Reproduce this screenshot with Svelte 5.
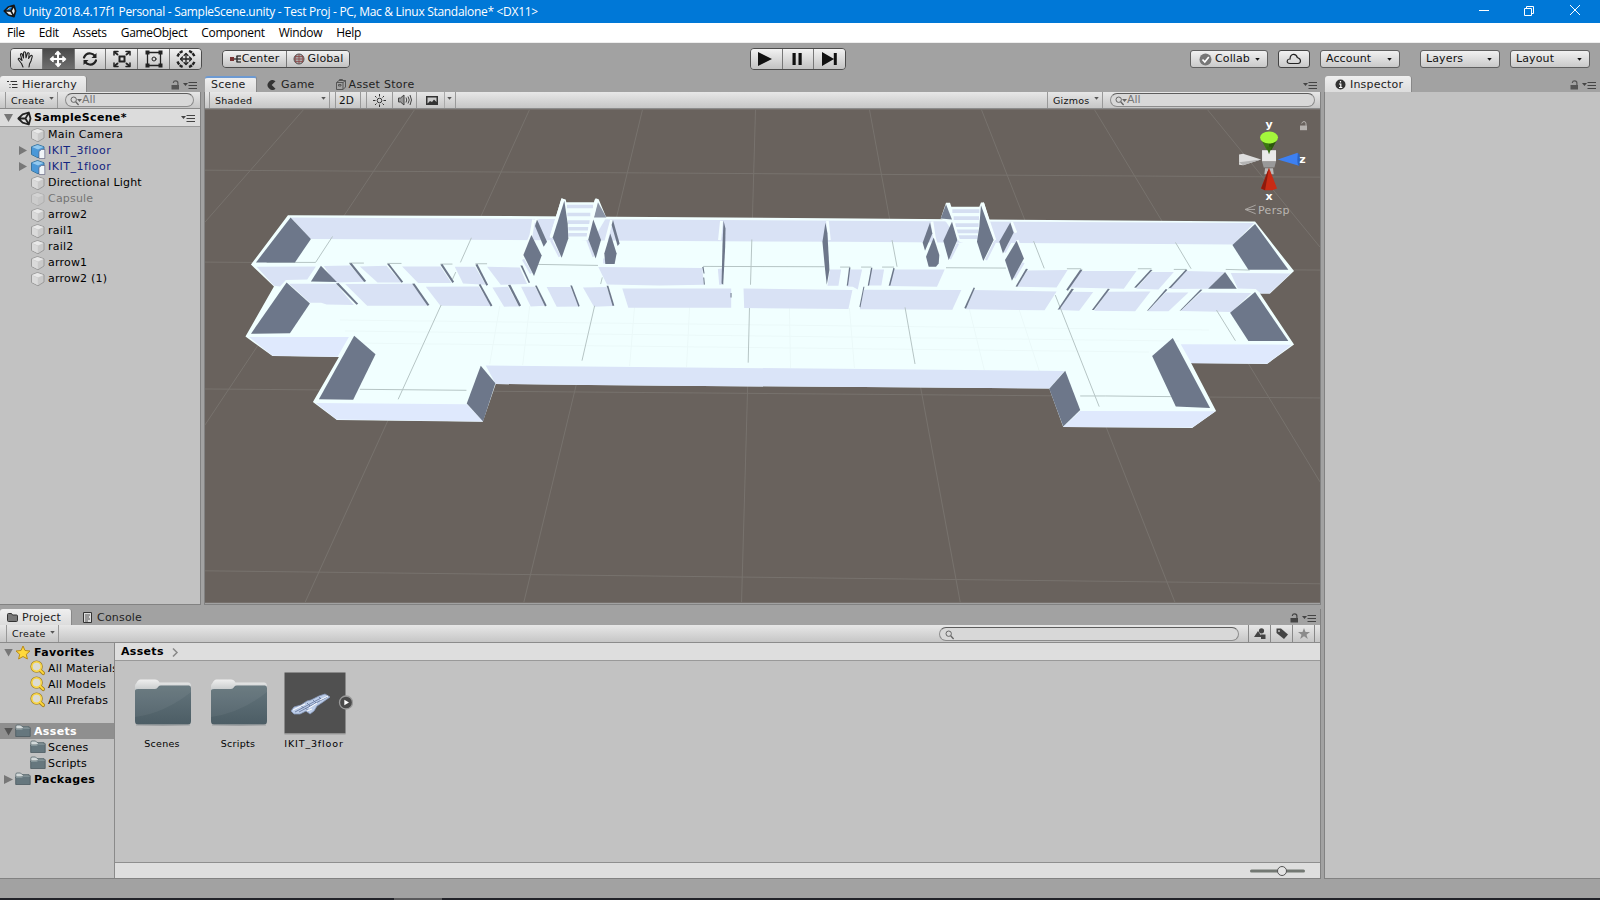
<script>
  const menus = ['File', 'Edit', 'Assets', 'GameObject', 'Component', 'Window', 'Help'];
  const tools = ['hand', 'move', 'rotate', 'scale', 'rect', 'transform'];
  const objects = [
    { name: 'Main Camera' },
    { name: 'IKIT_3floor', prefab: true },
    { name: 'IKIT_1floor', prefab: true },
    { name: 'Directional Light' },
    { name: 'Capsule', off: true },
    { name: 'arrow2' },
    { name: 'rail1' },
    { name: 'rail2' },
    { name: 'arrow1' },
    { name: 'arrow2 (1)' }
  ];

  // Wall faces, in thirds of a pixel, one list for each section of the building.
  const sections = [
    {
      x: 200,
      face: [
        '170,230 348,229 322,268 258,270 240,289 222,287',
        '372,228 450,226 495,275 405,277',
        '480,229 560,227 605,277 533,277',
        '607,229 722,229 755,279 655,279',
        '765,230 826,230 858,284 790,280',
        '862,230 960,232 982,282 903,284',
        '268,281 408,281 462,345 380,343 364,338 330,338',
        '436,282 637,281 685,347 502,347',
        '678,290 837,289 875,348 722,347'
      ],
      front: ['147,441 447,441 413,500 218,497', '348,639 801,643 850,695 410,689'],
      dark: [
        '272,82 333,147 285,217 168,217',
        '363,227 411,276 333,274',
        '260,277 330,340 270,430 153,431',
        '463,437 527,493 460,629 357,628',
        '843,527 887,580 850,695 801,641',
        '448,220 455,219 499,273 493,276',
        '562,222 568,221 610,275 605,278',
        '722,224 728,222 763,275 758,279',
        '827,224 833,222 865,284 860,287',
        '962,226 968,226 991,277 987,279',
        '408,280 416,279 475,341 470,344',
        '637,281 644,280 689,345 683,347',
        '837,284 842,282 878,346 873,349'
      ],
      line: 'M448,219H492M562,220H605M722,222H758M827,221H862M200,217H347M398,139L347,217M815,143L782,217M768,246L758,268M724,345L595,628M480,598L800,601'
    },
    {
      x: 460,
      face: [
        '98,292 145,290 178,349 133,350',
        '184,290 226,290 256,347 213,349',
        '261,291 332,291 357,349 291,350',
        '370,292 441,291 461,348 403,350',
        '488,295 815,295 815,353 506,353',
        '416,231 728,234 733,284 600,286 442,283',
        '775,237 787,235 787,284 779,284'
      ],
      front: [],
      dark: [
        '145,285 152,284 184,346 178,349',
        '226,287 231,286 261,346 256,349',
        '332,286 337,286 360,348 356,350',
        '441,287 446,287 464,346 459,348',
        '813,309 816,309 816,322 813,322',
        '728,231 732,231 735,250 732,250',
        '731,262 734,262 736,283 733,284'
      ],
      line: 'M235,223L415,226M730,229L1095,230M428,262L423,282M877,148L873,284M405,347L367,512M870,350L866,518'
    },
    {
      x: 800,
      face: [
        '92,238 125,238 117,287 84,287',
        '151,238 188,238 175,298 160,290 143,289',
        '215,238 254,238 246,286 206,286',
        '284,238 436,238 413,290 270,288',
        '-168,295 159,300 147,357 -166,354',
        '193,299 486,300 459,359 181,358',
        '524,300 772,304 736,361 500,358'
      ],
      front: [],
      dark: [
        '149,232 153,232 146,286 142,287',
        '215,233 219,233 209,286 205,287',
        '282,233 286,235 273,286 268,287',
        '192,290 195,290 183,352 180,350',
        '523,292 527,294 500,356 495,354'
      ],
      line: 'M122,231H152M185,231H216M248,231H284M440,233L620,234M278,150L293,230M317,352L347,522M703,153L735,235'
    },
    {
      x: 1000,
      face: [
        '84,241 205,240 172,292 54,290',
        '246,243 412,243 374,296 210,292',
        '456,246 524,246 478,298 411,296',
        '562,243 676,246 628,296 512,297',
        '695,249 875,250 812,310 785,310 770,297 716,295',
        '215,305 282,306 240,362 178,360',
        '325,305 454,304 408,364 285,362',
        '500,307 568,307 508,364 446,364',
        '605,307 757,309 697,366 545,363'
      ],
      front: ['545,463 878,464 804,521 577,520', '243,663 649,664 580,713 192,711'],
      dark: [
        '80,236 86,237 54,290 49,289',
        '243,238 250,239 206,302 201,299',
        '454,239 460,240 411,293 405,292',
        '560,238 565,240 516,293 507,295',
        '678,246 713,296 627,296',
        '217,296 224,297 181,358 175,359',
        '326,296 332,297 284,360 278,360',
        '500,297 505,299 448,361 443,363',
        '604,298 610,299 547,360 541,363',
        '768,102 868,239 748,239 700,165',
        '768,306 868,453 748,453 693,368',
        '521,444 633,654 530,650 459,498',
        '198,542 243,660 192,710 150,596'
      ],
      line: 'M203,236H246M416,236H457M524,238H562M680,238L752,240M529,157L576,236M652,360L709,452M168,315L300,650M243,618H320L515,620'
    }
  ];
</script>

{#snippet unity(size, color, fill)}
  <svg width={size} height={size} viewBox="0 0 16 16" {fill} stroke={color} stroke-width="1.9" stroke-linejoin="round">
    <path d="M1.4 8 6 3.5 12.6 1.6 14.4 8 12.6 14.4 6 12.5Z M1.8 8H9L12.6 1.8M9 8 12.6 14.2" />
  </svg>
{/snippet}

{#snippet down()}
  <svg class="down" width="6" height="4" viewBox="0 0 6 4"><path d="M0 0h6L3 3.6z" fill="currentColor" /></svg>
{/snippet}

{#snippet paneMenu()}
  <svg class="pane-menu" width="14" height="9" viewBox="0 0 14 9"><path d="M0 2h5L2.5 5z" fill="#444" /><path d="M5.5 1.5H14M5.5 4.5H14M5.5 7.5H14" stroke="#444" stroke-width="1.2" /></svg>
{/snippet}

{#snippet lock(color)}
  <svg width="9" height="10" viewBox="0 0 9 10"><path d="M.5 5h7.500v4.500H.5z" fill={color} /><path d="M2.400 3V2.500Q2.600.8 4.600.8 6.900.8 6.900 3v2" fill="none" stroke={color} stroke-width="1.200" /></svg>
{/snippet}

{#snippet mag(arrow)}
  <svg class="mag" width="13" height="10" viewBox="0 0 13 10" fill="none" stroke="#666"><circle cx="3.700" cy="3.700" r="2.700" /><path d="M5.700 5.700 8.600 9" stroke-width="1.300" />{#if arrow}<path d="M7 3h5L9.500 6z" fill="#666" stroke="none" />{/if}</svg>
{/snippet}

{#snippet cube(prefab)}
  <svg class="cube" width="16" height="16" viewBox="0 0 16 16">
    <path d="M1.500 3.800 7.500 1.500 14 3.800V11L8 14.800 1.500 11.500Z" fill={prefab ? '#4f96d0' : '#c9c9c9'} stroke={prefab ? '#39759f' : '#9a9a9a'} />
    <path d="M2 4 7.500 2 13.500 4 8 6.500Z" fill={prefab ? '#93c9ef' : '#e8e8e8'} />
    <path d="M2 4.500 7.800 7v7.200L2 11.200Z" fill={prefab ? '#4b98d8' : '#dadada'} />
    {#if prefab}<path d="M9 8.500 11.500 6.500H14.800V15.500H9Z" fill="#f1f5f8" stroke="#557" stroke-width=".6" />{/if}
  </svg>
{/snippet}

{#snippet smallFolder()}
  <svg class="fold" width="16" height="14" viewBox="0 0 16 14"><path d="M.8 2.500Q.8 1 2 1h3.500l1.500 1.500h7v3H.8z" fill="#d3d9da" stroke="#56666b" stroke-width=".8" /><path d="M.7 5h6L8 3.700h7.200v8.800H.7z" fill="#66777e" stroke="#4c5b61" stroke-width=".8" /><path d="M1 5.400h5.900L8.200 4.200h6.600" fill="none" stroke="#9fafb3" stroke-width=".7" /></svg>
{/snippet}

{#snippet bigFolder(id)}
  <svg width="64" height="64" viewBox="0 0 64 64">
    <defs>
      <linearGradient id={id} x1="0" y1="0" x2="0" y2="1"><stop offset="0" stop-color="#64757c" /><stop offset="1" stop-color="#4c5d65" /></linearGradient>
      <linearGradient id={id + 't'} x1="0" y1="0" x2="0" y2="1"><stop offset="0" stop-color="#efefef" /><stop offset="1" stop-color="#b4b9ba" /></linearGradient>
    </defs>
    <path d="M4 15Q4 13.500 5.500 12 7 8.500 9.500 8.500H24Q27 8.500 28.500 11.500H57Q60 11.500 60 15V24H4Z" fill={'url(#' + id + 't)'} />
    <path d="M4 20Q4 18 7 18H24Q26 18 27.500 15.500 28 14.500 30 14.500H58Q60 14.500 60 17V50Q60 53.500 57 53.500H7Q4 53.500 4 50Z" fill={'url(#' + id + ')'} />
    <path d="M5 54Q32 55 59 54" stroke="#8a8f91" fill="none" opacity=".7" />
    <path d="M4 20V46Q34 42 60 21V15H29L26 18H6Z" fill="#fff" opacity=".05" />
  </svg>
{/snippet}

<div class="app">
  <header class="title">
    {@render unity(14, '#161616', '#eee')}
    <span class="t">Unity 2018.4.17f1 Personal - SampleScene.unity - Test Proj - PC, Mac &amp; Linux Standalone* &lt;DX11&gt;</span>
    <svg class="win" width="110" height="12" viewBox="0 0 110 12" fill="none" stroke="#fff"><path d="M3 6.500h10M48.500 4.500h7v7h-7zM50.500 4V2.500h7v7H56M94 1l10 10M104 1 94 11" /></svg>
  </header>
  <nav class="menu">{#each menus as m}<span>{m}</span>{/each}</nav>

  <div class="toolbar">
    <div class="btns tools">
      {#each tools as t}
        <button class:sel={t === 'move'} aria-label={t}>
          <svg width="20" height="18" viewBox="0 0 20 18" fill="none" stroke="#222" stroke-width="1.300" stroke-linecap="round" stroke-linejoin="round">
            {#if t === 'hand'}<path d="M7 17 5.500 13.500 2.300 9.500Q2 8 3.500 8.300L6 10.500 4.500 4.500Q5 3 6.200 4L7.500 8 7.600 2.500Q8.500 1 9.600 2.500L10 7.800 11.500 3Q12.800 2.200 13.200 3.500L12.600 8.500 14.800 5.500Q16.200 5 16.300 6.300L15 11 13.500 14 13 17" stroke-width="1.100" />
            {:else if t === 'move'}<g fill="#fff" stroke="#fff" stroke-width="1"><path d="M10 3V15M4 9H16" stroke-width="2" /><path d="M10 1.200 12.600 4.200H7.400ZM10 16.800 7.400 13.800H12.600ZM2.200 9 5.200 6.400V11.600ZM17.800 9 14.800 6.400V11.600Z" /></g>
            {:else if t === 'rotate'}<path d="M4 7.500Q6 3 10.500 3.500 13 3.800 14.500 5.500M16 10.500Q14 15 9.500 14.500 7 14.200 5.500 12.500" stroke-width="2.200" /><path d="M16.500 3V8H11.500ZM3.500 15V10H8.500Z" fill="#222" stroke="none" />
            {:else if t === 'scale'}<path d="M7.500 6.500h5v5h-5z" stroke-width="2" stroke-linejoin="miter" /><path d="M5.500 4.500 3 2.500M14.500 4.500 17 2.500M5.500 13.500 3 15.500M14.500 13.500 17 15.500" stroke-width="1.900" /><path d="M2 5V1.500H6M14 1.500h4V5M2 13v3.500H6M14 16.500h4V13" stroke-width="1.500" />
            {:else if t === 'rect'}<path d="M3.500 2.500h13v13h-13z" /><path d="M1.500.500h4v4h-4zM14.500.500h4v4h-4zM1.500 13.500h4v4h-4zM14.500 13.500h4v4h-4z" fill="#222" stroke="none" /><circle cx="10" cy="9" r="2" stroke-width="1" />
            {:else}<path d="M10 4V14M5 9H15" /><path d="M8 5.500 10 3.500 12 5.500M8 12.500 10 14.500 12 12.500M6.500 7 4.500 9 6.500 11M13.500 7 15.500 9 13.500 11" stroke-width="1.200" /><path d="M1.500 6.500Q3 2.500 7 1M13 1Q17 2.500 18.500 6.500M1.500 11.500Q3 15.500 7 17M13 17Q17 15.500 18.500 11.500" stroke-width="2.400" stroke-linecap="butt" stroke-dasharray="3.400 .8" />{/if}
          </svg>
        </button>
      {/each}
    </div>
    <div class="btns pivot">
      <button class="center"><svg width="11" height="8" viewBox="0 0 11 8"><path d="M0 2h4v4H0z" fill="#733" /><path d="M4 4h3M6.500 1H11M6.500 4H11M6.500 7H11" stroke="#444" fill="none" stroke-width="1.300" /><path d="M7 1v6" stroke="#333" stroke-width="1.500" /></svg>Center</button>
      <button><svg width="12" height="12" viewBox="0 0 12 12"><circle cx="6" cy="6" r="5" fill="#aaa" stroke="#555" /><path d="M1 6h10M6 1v10M3 2q-2 4 0 8M9 2q2 4 0 8M2 3.500h8M2 8.500h8" fill="none" stroke="#8c4747" stroke-width=".8" /></svg>Global</button>
    </div>
    <div class="btns play">
      <button aria-label="Play"><svg class="nudge" width="16" height="14" viewBox="0 0 16 14"><path d="M1 0 15 7 1 14Z" fill="#111" /></svg></button>
      <button aria-label="Pause"><svg class="nudge" width="16" height="14" viewBox="0 0 16 14"><path d="M3.500 1h3.200v12H3.500zM9.500 1h3.200v12H9.500z" fill="#111" /></svg></button>
      <button aria-label="Step"><svg width="16" height="14" viewBox="0 0 16 14"><path d="M0 0 12 7 0 14ZM11.800 1h3v12h-3z" fill="#111" /></svg></button>
    </div>
    <div class="right">
      <button class="box collab"><svg width="13" height="13" viewBox="0 0 13 13"><circle cx="6.500" cy="6.500" r="6" fill="#777" /><path d="M3.500 6.500 5.800 9 9.800 4" fill="none" stroke="#fff" stroke-width="1.700" /></svg>Collab{@render down()}</button>
      <button class="box cloud" aria-label="Services"><svg width="16" height="12" viewBox="0 0 16 12"><path d="M4 10.500Q1 10.500 1.200 8 1.500 5.800 4 6 4.200 1.500 7.500 1.300 10.500 1.200 11.300 4.500 14.500 5.500 14.500 8 14.300 10.500 12 10.500Z" fill="none" stroke="#222" stroke-width="1.200" /></svg></button>
      <button class="box drop">Account{@render down()}</button>
      <button class="box drop gap">Layers{@render down()}</button>
      <button class="box drop">Layout{@render down()}</button>
    </div>
  </div>

  <main class="work">
    <div class="left">
      <div class="upper">
        <section class="hier">
          <div class="tabs">
            <div class="tab on" style:width="87px"><svg width="12" height="9" viewBox="0 0 12 9" stroke="#333" fill="none"><path d="M3.500 1.500H10M5 4.500h5.500M5 7.500h5.500M0 1.500h2M2.500 4.500h1M2.500 7.500h1" /></svg>Hierarchy</div>
            <span class="corner">{@render lock('#555')}{@render paneMenu()}</span>
          </div>
          <div class="bar">
            <span class="create">Create{@render down()}</span>
            <div class="search hs">{@render mag(true)}All</div>
          </div>
          <div class="scene-row"><i class="tri open"></i>{@render unity(15, '#222', 'none')}<b>SampleScene*</b>{@render paneMenu()}</div>
          <div class="list">
            {#each objects as o}
              <div class="obj" class:off={o.off} class:prefab={o.prefab}><i class="tri" class:hide={!o.prefab}></i>{@render cube(o.prefab)}{o.name}</div>
            {/each}
          </div>
        </section>

        <section class="scene">
          <div class="tabs">
            <div class="tab on blue" style:width="52px">Scene</div>
            <div class="tab game"><svg width="10" height="10" viewBox="0 0 10 10"><path d="M8.500 1.300A4.800 4.800 0 1 0 8.500 8.700L4.700 5Z" fill="#333" /></svg>Game</div>
            <div class="tab store"><svg width="10" height="11" viewBox="0 0 10 11" fill="none" stroke="#555"><path d="M.5 3.500h6.500v7H.5zM.5 3.500 3 1.500H9.500L7 3.500M9.500 1.500V8L7 10.500M2.500 5.500h2.500v1.500H2.500zM3.500 1.500V.5H6.500v1" /></svg>Asset Store</div>
            <span class="corner">{@render paneMenu()}</span>
          </div>
          <div class="bar sbar">
            <span class="shaded">Shaded{@render down()}</span>
            <span class="two">2D</span>
            <span class="ic sun"><svg width="13" height="13" viewBox="0 0 13 13" fill="none" stroke="#333"><circle cx="6.500" cy="6.500" r="2.300" /><path d="M6.500 0v2.500M6.500 10.500V13M0 6.500h2.500M10.500 6.500H13M2 2l1.500 1.500M9.500 9.500 11 11M11 2 9.500 3.500M3.500 9.500 2 11" /></svg></span>
            <span class="ic spk"><svg width="14" height="12" viewBox="0 0 14 12" fill="none" stroke="#444"><path d="M.5 4h2L6 1v10L2.500 8h-2z" fill="#999" /><path d="M8 3.500q1.500 2.500 0 5M10 2.500q2.500 3.500 0 7M12 1q3 5 0 10" /></svg></span>
            <span class="ic pic"><svg width="12" height="9" viewBox="0 0 12 9"><path d="M0 0h12v9H0z" fill="#333" /><path d="M1.500 1.500h9v4.500L8 3.500 6 6 4 5 1.500 7.500z" fill="#ccc" /></svg></span>
            <span class="ic mini">{@render down()}</span>
            <span class="giz">Gizmos{@render down()}</span>
            <div class="search ss">{@render mag(true)}All</div>
          </div>

          <svg class="view" width="1116" height="494" viewBox="205 109 1116 494">
            <rect x="205" y="109" width="1116" height="494" fill="#69625d" />
            <path d="M205 170 1321 177M205 262 1321 270M205 389 1321 398M205 571 1321 584M304 109 205 222M415 109 205 425M530 109 305 603M643 109 524 603M756 109 742 603M870 109 961 603M982 109 1176 603M1095 109 1321 482M1208 109 1321 247" fill="none" stroke="#77726d" />
            <polygon points="288,215 540,216 1256,221.500 1295,271 1271,293.500 1261,293.500 1295,344.500 1268,364 1192,363 1217,411 1193,428 1064,427 1050,388.500 931,387.500 703,386 589,385 496,384 483,421.700 337,420 313,402 339,357 272.500,356 245.500,336.500 274,286.500 251,264.500" fill="#f1ffff" />
            <polygon points="291,217.500 1255,223 1234,244.500 840,241.700 311,239" fill="#d9e2f5" />
            <path d="M340 320L1210 330M345 331L1180 341M350 343L1150 352M500 306 490 364M530 306 523 365M635 306 630 366M690 307 687 367M790 308 791 368M850 308 855 368M970 309 985 370M1020 310 1040 371" stroke="#ebf9f9" fill="none" />
            <polygon points="486,365.500 1065,371 1050,388.500 931,387.500 703,386 589,385 496,384" fill="#dae4f8" />
            {#each sections as s}
              <g transform="translate({s.x} 190) scale(.33333)">
                {#each s.face as p}<polygon points={p} fill="#d9e2f5" />{/each}
                {#each s.front as p}<polygon points={p} fill="#dfe9fd" />{/each}
                <path d={s.line} fill="none" stroke="#b6c5c5" stroke-width="3" />
                {#each s.dark as p}<polygon points={p} fill="#6d778a" />{/each}
              </g>
            {/each}
            <g transform="translate(460 190) scale(.33333)">
              <polygon points="305,25 318,28 320,36 403,36 408,24 417,27 440,82 400,150 330,155 270,142" fill="#f1ffff" />
              <path d="M322 49H400M323 73H392M325 96H390M326 116H386M326 134H382" stroke="#d5dff2" stroke-width="11" />
              <polygon points="415,36 440,82 403,82" fill="#8b94a5" />
              <path d="M222 88 214 135 188 198M232 86 228 98M310 26 274 142M410 28 385 140M456 90 440 150 432 200M786 92 780 150" stroke="#f4ffff" stroke-width="9" fill="none" />
              <path d="M274 150 300 200M383 150 402 200M190 208 214 250M434 205 434 220" stroke="#d9e2f5" stroke-width="7" />
              <g fill="#6d778a">
                <polygon points="314,32 324,100 326,145 306,203 279,142" />
                <polygon points="401,88 424,150 408,205 386,148" />
                <polygon points="232,88 262,155 252,170 226,108" />
                <polygon points="215,135 246,196 223,258 191,195" />
                <polygon points="460,90 480,160 474,168 456,105" />
                <polygon points="452,130 471,190 465,222 437,222 434,190" />
                <polygon points="792,92 798,115 797,170 791,284 786,280 789,160" />
              </g>
            </g>
            <g transform="translate(800 190) scale(.33333)">
              <polygon points="440,38 452,38 456,50 540,50 545,37 554,37 588,150 560,180 480,155 440,95 424,85" fill="#f1ffff" />
              <path d="M459 63H540M463 84H539M468 105H538M472 124H537M476 141H535" stroke="#d5dff2" stroke-width="11" />
              <polygon points="440,42 458,88 424,85" fill="#747e91" />
              <path d="M398 94 405 142 421 195M461 95 478 150M550 38 587 150M637 96 650 128M654 150 675 208M84 92 90 150" stroke="#f4ffff" stroke-width="8" fill="none" />
              <path d="M586 158 560 210M476 160 452 207M673 218 645 264M644 136 616 187" stroke="#d9e2f5" stroke-width="7" />
              <g fill="#6d778a">
                <polygon points="545,45 583,150 552,213 533,155 540,110" />
                <polygon points="458,95 474,150 448,210 432,152" />
                <polygon points="392,97 399,130 377,182 370,158" />
                <polygon points="403,142 420,195 418,220 410,230 388,230 380,200" />
                <polygon points="633,97 643,128 611,190 600,155" />
                <polygon points="652,152 674,205 638,272 617,210" />
                <polygon points="78,98 84,130 90,240 82,284 76,230 69,155" />
              </g>
            </g>
            <g transform="translate(1160 0) scale(.33333)">
              <polygon points="303,413 357,413 330,462" fill="#3c7613" />
              <polygon points="330,430 357,413 330,462" fill="#2c570e" />
              <ellipse cx="330" cy="412" rx="27" ry="18" fill="#a4f73c" />
              <polygon points="240,463 240,494 252,495 306,478 252,461" fill="#dedede" />
              <polygon points="240,486 252,495 306,478" fill="#b4b4b4" />
              <polygon points="309,450 351,450 351,484 309,484" fill="#e9e9e9" />
              <polygon points="309,484 351,484 346,502 314,502" fill="#999" />
              <polygon points="322,440 338,440 330,462" fill="#356a12" />
              <polygon points="356,478 416,458 420,497" fill="#3d80f2" />
              <ellipse cx="419" cy="478" rx="4" ry="19" fill="#2d62bd" />
              <path d="M318 504 316 522 344 522 342 504" fill="#b9b9b9" />
              <polygon points="330,503 354,565 340,570 318,570 306,565" fill="#c92b14" />
              <polygon points="330,503 306,565 318,570" fill="#8d1a0c" />
              <path d="M290 615 258 628 290 641M258 628H288" fill="none" stroke="#aaa6a2" stroke-width="3" />
              <path d="M423 376h21v14h-21z" fill="#b5b1ae" />
              <path d="M428 370q2-6 7-6 6 0 6 7v6" fill="none" stroke="#b5b1ae" stroke-width="3" />
            </g>
            <g class="giztext"><text x="1270" y="128" text-anchor="middle">y</text><text x="1303.500" y="163" text-anchor="middle">z</text><text x="1270" y="200" text-anchor="middle">x</text><text class="persp" x="1259" y="214">Persp</text></g>
          </svg>
        </section>
      </div>

      <section class="project">
        <div class="tabs">
          <div class="tab on" style:width="72px"><svg width="11" height="9" viewBox="0 0 11 9"><path d="M.5 1.500Q.5.5 1.500.5h3l1 1.500h4q1 0 1 1v4.500q0 1-1 1h-8q-1 0-1-1z" fill="#777" stroke="#333" /></svg>Project</div>
          <div class="tab console"><svg width="9" height="11" viewBox="0 0 9 11" fill="none" stroke="#333"><path d="M.5.500h8v10h-8z" fill="#ddd" /><path d="M2 3h5M2 5h4M2 7h5M2 9h3" stroke-width=".8" /></svg>Console</div>
          <span class="corner">{@render lock('#444')}{@render paneMenu()}</span>
        </div>
        <div class="bar pbar">
          <span class="create">Create{@render down()}</span>
          <div class="search ps">{@render mag(false)}</div>
          <span class="pi"><svg width="12" height="11" viewBox="0 0 12 11" fill="#444"><path d="M4 3 8 9H0z" /><circle cx="7.500" cy="2.800" r="2.600" /><path d="M7 6.500h4.500V11H7z" /></svg></span>
          <span class="pi"><svg width="12" height="11" viewBox="0 0 12 11"><path d="M.5.500h4.500l7 6L8 11 .5 5z" fill="#444" /><circle cx="3" cy="3" r=".9" fill="#ccc" /></svg></span>
          <span class="pi"><svg width="12" height="11" viewBox="0 0 12 11"><path d="M6 0 7.500 4H12L8.500 6.700 9.800 11 6 8.300 2.200 11 3.500 6.700 0 4h4.500z" fill="#8b8b8b" /></svg></span>
          <span class="pi last"></span>
        </div>
        <div class="pbody">
          <aside class="tree">
            <div class="row"><i class="tri open"></i><svg class="fold" width="16" height="15" viewBox="0 0 16 15"><path d="M8 1 10 5.500 15 6 11.300 9.300 12.400 14 8 11.500 3.600 14 4.700 9.300 1 6 6 5.500Z" fill="#ffd93a" stroke="#b98b17" /></svg><b>Favorites</b></div>
            {#each ['All Materials', 'All Models', 'All Prefabs'] as f}
              <div class="row sub"><svg class="fold" width="17" height="16" viewBox="0 0 17 16" fill="none"><path d="M9.500 9.500 14 13.500" stroke="#a98421" stroke-width="4" stroke-linecap="round" /><circle cx="7" cy="6.500" r="5" stroke="#9c7c26" stroke-width="3.200" /><circle cx="7" cy="6.500" r="5" fill="#dcdcd4" stroke="#f7d548" stroke-width="1.800" /><path d="M10.500 10 14 13.500" stroke="#ffd93a" stroke-width="2" stroke-linecap="round" /></svg>{f}</div>
            {/each}
            <div class="row picked"><i class="tri open"></i>{@render smallFolder()}<b>Assets</b></div>
            <div class="row sub">{@render smallFolder()}Scenes</div>
            <div class="row sub">{@render smallFolder()}Scripts</div>
            <div class="row"><i class="tri"></i>{@render smallFolder()}<b>Packages</b></div>
          </aside>
          <div class="content">
            <div class="crumb"><b>Assets</b><svg width="7" height="9" viewBox="0 0 7 9"><path d="M1 .5 5 4.500 1 8.500" fill="none" stroke="#888" stroke-width="1.500" /></svg></div>
            <div class="grid">
              <figure>{@render bigFolder('fa')}<figcaption>Scenes</figcaption></figure>
              <figure>{@render bigFolder('fb')}<figcaption>Scripts</figcaption></figure>
              <figure>
                <svg width="76" height="64" viewBox="0 0 76 64">
                  <rect x="7.500" y="1.500" width="61" height="61" fill="#505050" />
                  <path d="M7.500 63h61" stroke="#999" />
                  <path d="M14 40 17 36 24 34 30 30 34 29 42 25 48 23 53 26 46 31 40 35 37 40 33 43 29 40 23 43 17 43Z" fill="#bccde9" stroke="#8797b7" stroke-width=".8" />
                  <path d="M18 41 44 27M22 41 50 26M24 35 27 37M30 32 33 35M36 29 39 32M42 26 45 29M28 37 32 40" stroke="#6a7a9f" stroke-width=".9" fill="none" />
                  <path d="M16 39 28 33M32 37 40 32M30 40 35 38M43 29 51 25" stroke="#fff" stroke-width="1" />
                  <circle cx="69" cy="31.500" r="6.500" fill="#4a4a4a" stroke="#999" stroke-width="1.300" /><path d="M67.300 28.800 72 31.500 67.300 34.200Z" fill="#fff" />
                </svg>
                <figcaption class="wide">IKIT_3floor</figcaption>
              </figure>
            </div>
            <div class="foot"><svg width="55" height="12" viewBox="0 0 55 12"><path d="M1.500 6h52" stroke="#737873" stroke-width="3" stroke-linecap="round" /><circle cx="32" cy="6" r="4.500" fill="#e4e4e4" stroke="#555" /></svg></div>
          </div>
        </div>
      </section>
    </div>

    <section class="insp">
      <div class="tabs">
        <div class="tab on" style:width="87px"><svg width="11" height="11" viewBox="0 0 11 11"><circle cx="5.500" cy="5.500" r="5" fill="#333" /><path d="M5.500 2v1.500M4 5h1.800v3.500M4 8.500h3.300" stroke="#fff" fill="none" stroke-width="1.200" /></svg>Inspector</div>
        <span class="corner">{@render lock('#555')}{@render paneMenu()}</span>
      </div>
      <div class="empty"></div>
    </section>
  </main>
  <footer class="status"></footer>
  <div class="taskbar"><i></i></div>
</div>

<style>
  :global(body) { margin: 0; overflow: hidden; }
  .app { width: 1600px; height: 900px; background: #a2a2a2; display: flex; flex-direction: column; font: 11px/16px "DejaVu Sans", sans-serif; color: #111; overflow: hidden; letter-spacing: .12px; }
  .app * { box-sizing: border-box; }
  svg { display: block; flex: none; }
  b { letter-spacing: .32px; color: #000; }
  button { font: inherit; color: #111; letter-spacing: inherit; margin: 0; padding: 0; }

  .title { height: 23px; flex: none; background: #0078d7; color: #fff; display: flex; align-items: center; padding: 0 14px 1px 3px; }
  .title .t { font: 12px/22px "Open Sans", sans-serif; margin: 1px 0 0 6px; letter-spacing: -.3px; white-space: nowrap; }
  .win { margin: -2px 0 0 auto; }
  .menu { height: 20px; flex: none; background: #fff; border-bottom: 1px solid #eee; display: flex; gap: 14px; padding-left: 7px; font: 12px/19px "Open Sans", sans-serif; letter-spacing: -.31px; color: #000; }

  .toolbar { height: 33px; flex: none; display: flex; padding: 5px 10px 0; align-items: flex-start; }
  .btns { display: flex; height: 22px; border: 1px solid #4c4c4c; border-radius: 4px; overflow: hidden; }
  .btns button { border: 0; border-right: 1px solid #777; background: linear-gradient(#f2f2f2, #c2c2c2); display: flex; align-items: center; justify-content: center; flex: 1; }
  .btns button:last-child { border-right: 0; }
  .btns .sel { background: linear-gradient(#4a4a4a, #6f6f6f); }
  .btns .nudge { margin-right: 2px; }
  .tools { width: 192px; }
  .pivot { height: 18px; width: 128px; margin: 2px 0 0 20px; }
  .pivot button { gap: 3px; }
  .pivot .center { flex: 0 0 64px; gap: 1px; }
  .play { width: 96px; margin-left: 400px; }
  .right { display: flex; margin: 2px 0 0 344px; }
  .box { height: 18px; border: 1px solid #606060; border-radius: 3px; background: linear-gradient(#f1f1f1, #c9c9c9); display: flex; align-items: center; }
  .collab { width: 78px; padding: 0 7px 0 8px; gap: 3px; }
  .collab :global(.down) { margin-left: auto; }
  .cloud { width: 32px; margin-left: 10px; justify-content: center; border-color: #444; }
  .drop { width: 80px; margin-left: 10px; padding: 0 7px 0 5px; justify-content: space-between; }
  .gap { margin-left: 20px; }
  .down { width: 5px; height: 3px; }

  .work { flex: 1; display: flex; gap: 3px; min-height: 0; }
  .left { width: 1321px; display: flex; flex-direction: column; }
  .upper { display: flex; gap: 3px; height: 529px; }
  .hier { width: 201px; display: flex; flex-direction: column; border-right: 1px solid #828282; border-bottom: 1px solid #828282; }
  .scene { width: 1117px; display: flex; flex-direction: column; border: solid #828282; border-width: 0 1px 1px 1px; }
  .view { width: 1115px; }
  .tabs { height: 16px; flex: none; display: flex; background: #a2a2a2; letter-spacing: .2px; }
  .hier .tabs { width: 201px; }
  .scene .tabs { width: 1117px; margin-left: -1px; padding-left: 1px; }
  .tab { display: flex; align-items: center; gap: 3px; height: 16px; color: #222; white-space: nowrap; line-height: 15px; padding-top: 1px; }
  .tab.on { background: linear-gradient(#efefef, #dcdcdc); border-right: 1px solid #888; border-radius: 3px 3px 0 0; padding-left: 7px; }
  .tab.on.blue { border-top: 2px solid #6d9ad2; padding: 0 0 2px 6px; }
  .game { margin-left: 10px; gap: 4px; }
  .store { margin-left: 21px; letter-spacing: .3px; }
  .corner { margin-left: auto; padding: 2px 4px 0 0; display: flex; gap: 3px; align-items: center; height: 16px; }
  .bar { height: 17px; flex: none; display: flex; background: linear-gradient(#e7e7e7, #c6c6c6); border-bottom: 1px solid #8b8b8b; font-size: 9.5px; letter-spacing: .25px; line-height: 17px; }
  .bar span { display: flex; align-items: center; border-right: 1px solid #999; }
  .bar :global(.down) { margin: -3px 3px 0 auto; color: #555; }
  .bar .create { width: 53px; margin-left: 5px; border-left: 1px solid #999; padding-left: 5px; letter-spacing: .35px; }
  .search { height: 14px; margin-top: 1px; border: 1px solid #8c8c8c; border-top-color: #5d5d5d; border-radius: 8px; background: #d8d8d8; display: flex; align-items: center; color: #777; font-size: 11px; line-height: 12px; padding-left: 4px; letter-spacing: 0; }
  .search .mag { margin: 1px -1px 0 0; }
  .hs { width: 129px; margin-left: 7px; }
  .shaded { width: 121px; margin-left: 4px; border-left: 1px solid #999; padding-left: 5px; }
  .two { width: 26px; margin-left: 5px; border-left: 1px solid #999; padding-left: 3px; font-size: 10.5px; letter-spacing: 0; }
  .bar .two, .bar .sun { border-left: 1px solid #999; }
  .ic { justify-content: center; }
  .sun { width: 27px; margin-left: 5px; }
  .spk { width: 24px; }
  .pic { width: 28px; padding-left: 3px; }
  .mini { width: 11px; }
  .bar .pic { border-right-color: #aaa; }
  .bar .mini :global(.down) { margin-left: 2px; }
  .giz { width: 56px; margin-left: 591px; border-left: 1px solid #999; padding-left: 5px; }
  .ss { width: 205px; margin-left: 7px; }
  .scene-row { height: 18px; flex: none; background: #dcdcdc; border-bottom: 1px solid #999; display: flex; align-items: center; padding: 1px 0 0 4px; }
  .scene-row b { margin-left: 2px; }
  .scene-row > :global(.pane-menu) { margin-left: auto; margin-right: 5px; }
  .scene-row > :global(svg:nth-child(2)) { margin-left: 4px; }
  .list { flex: 1; background: #c2c2c2; }
  .obj { display: flex; align-items: center; height: 16px; padding-left: 19px; color: #000; letter-spacing: .2px; white-space: nowrap; line-height: 15px; padding-bottom: 1px; }
  .obj .cube { margin: 0 2px 0 3px; }
  .obj.prefab { color: #13257f; letter-spacing: .5px; }
  .obj.off { color: #747474; }
  .obj.off .cube { opacity: .45; }
  .tri { width: 8px; height: 9px; background: #777; clip-path: polygon(0 0, 100% 50%, 0 100%); flex: none; }
  .tri.open { width: 9px; height: 8px; clip-path: polygon(0 0, 100% 0, 50% 100%); }
  .tri.hide { visibility: hidden; }
  .giztext text { font: bold 11px "DejaVu Sans", sans-serif; fill: #fff; }
  .giztext .persp { font-weight: normal; fill: #bab6b2; letter-spacing: .3px; }

  .project { flex: 1; display: flex; flex-direction: column; margin-top: 4px; border-right: 1px solid #828282; border-bottom: 1px solid #828282; min-height: 0; }
  .project .tabs .on { padding-left: 7px; gap: 4px; }
  .console { margin-left: 11px; gap: 5px; }
  .pbar { height: 18px; line-height: 18px; }
  .pbar .create { margin-left: 6px; }
  .ps { width: 300px; margin: 2px 9px 0 auto; padding-left: 5px; }
  .pi { width: 22px; justify-content: center; }
  .bar .pi { border-right: 0; border-left: 1px solid #888; }
  .bar .last { width: 6px; }
  .pbody { flex: 1; display: flex; min-height: 0; }
  .tree { width: 115px; background: #c2c2c2; border-right: 1px solid #8a8a8a; overflow: hidden; padding-top: 1px; }
  .row { display: flex; align-items: center; height: 16px; padding: 1px 0 0 4px; white-space: nowrap; color: #000; letter-spacing: .2px; line-height: 15px; }
  .row .fold { margin: -1px 3px 0 2px; }
  .row .tri { width: 9px; }
  .row b { letter-spacing: .35px; }
  .row.sub { padding-left: 28px; }
  .row.sub .fold { width: 16px; margin-right: 2px; }
  .picked { background: #8f8f8f; margin-top: 15px; }
  .picked b { color: #fff; }
  .picked .tri { background: #555; }
  .content { flex: 1; background: #c2c2c2; display: flex; flex-direction: column; }
  .crumb { height: 18px; background: #dedede; border-bottom: 1px solid #999; display: flex; align-items: center; gap: 8px; padding: 1px 0 0 6px; }
  .grid { display: flex; flex: 1; padding: 10px 0 0 10px; }
  figure { margin: 0; width: 76px; display: flex; flex-direction: column; align-items: center; font-size: 9.5px; letter-spacing: .3px; }
  figcaption { line-height: 14px; margin: 2px 2px 0 0; color: #000; }
  figcaption.wide { letter-spacing: .85px; }
  .foot { height: 16px; background: #dedede; border-top: 1px solid #8e8e8e; display: flex; justify-content: flex-end; align-items: center; padding: 1px 15px 0 0; }
  .insp { flex: 1; display: flex; flex-direction: column; border-bottom: 1px solid #828282; }
  .insp .on { padding-left: 10px; gap: 4px; margin-left: 1px; }
  .empty { flex: 1; background: #c2c2c2; border-left: 1px solid #828282; }
  .status { height: 19px; flex: none; }
  .taskbar { height: 2px; flex: none; background: #222329; }
  .taskbar i { display: block; width: 48px; height: 2px; margin-left: 394px; background: #5a5a5c; }
</style>
